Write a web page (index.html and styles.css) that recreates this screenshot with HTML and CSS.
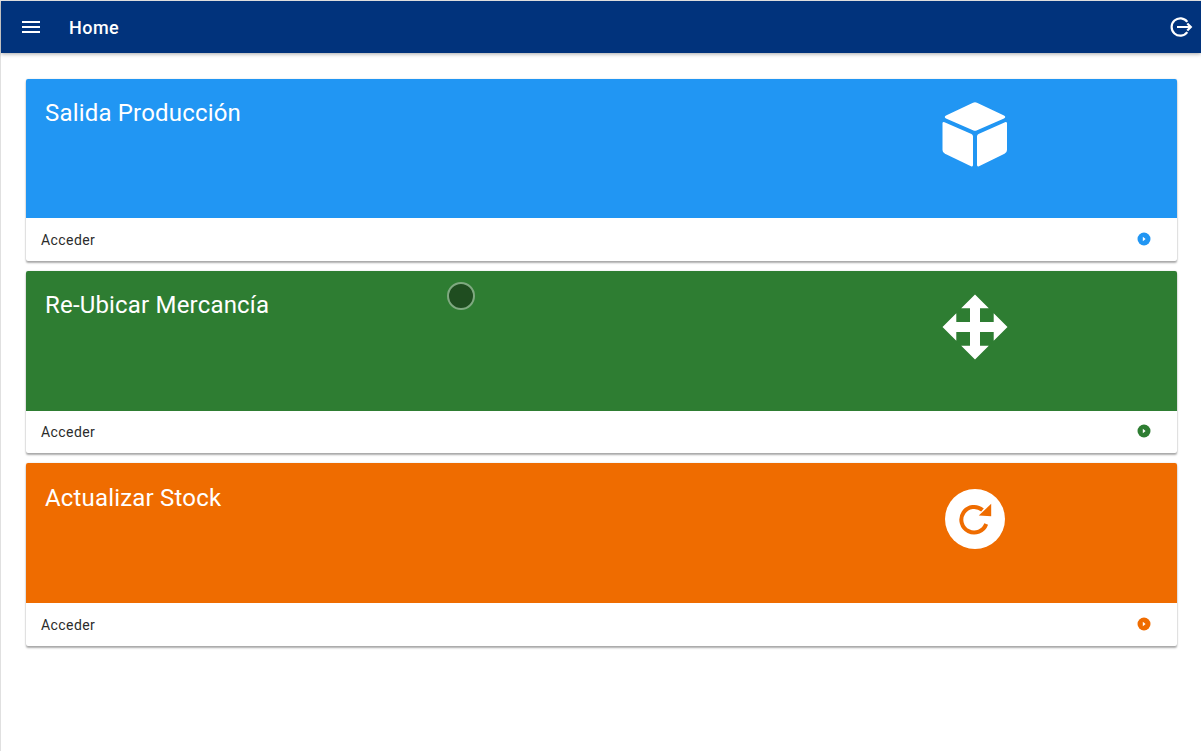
FILE: index.html
```html
<!DOCTYPE html>
<html lang="es">
<head>
<meta charset="utf-8">
<title>Home</title>
<link rel="stylesheet" href="styles.css">
</head>
<body>
<div class="app">
  <header class="toolbar">
    <svg class="menu-icon" viewBox="0 0 24 24"><path d="M3 18h18v-2H3v2zm0-5h18v-2H3v2zm0-7v2h18V6H3z"/></svg>
    <h1 class="title">Home</h1>
    <svg class="logout-icon" viewBox="0 0 24 24"><path class="ring" d="M18.300 6.800A8.700 8.700 0 1 0 18.300 17.200"/><path class="ring" d="M8 12H21.500M18.300 8.500L21.800 12L18.300 15.500"/></svg>
  </header>
  <main class="cards">
    <section class="card">
      <div class="card-head blue">
        <h2 class="card-title">Salida Producción</h2>
        <svg class="big-icon" viewBox="0 0 66 66"><path d="M33 1.200Q34 1.200 35 1.700L62 14.500Q64.500 16 62 17.500L34.500 29.500Q33 30 31.500 29.500L4 17.500Q1.500 16 4 14.500L31 1.700Q32 1.200 33 1.200Z"/><path d="M0.500 22.500Q0.500 20.500 2.500 21.200L29.500 33Q31 33.800 31 35.500V64Q31 66 29 65.200L3 52.800Q0.500 51.600 0.500 49Z"/><path d="M65 22.500Q65 20.500 63 21.200L36.500 33Q35 33.800 35 35.500V64Q35 66 37 65.200L62.500 52.800Q65 51.600 65 49Z"/></svg>
      </div>
      <div class="card-foot">
        <span class="access">Acceder</span>
        <svg class="go-icon text-blue" viewBox="0 0 14 14"><circle cx="7" cy="7" r="6.500"/><path class="go-arrow" d="M5.800 4.700L8.600 7l-2.800 2.300z"/></svg>
      </div>
    </section>
    <section class="card">
      <div class="card-head green">
        <h2 class="card-title">Re-Ubicar Mercancía</h2>
        <svg class="big-icon" viewBox="0 0 66 66"><path d="M33 0.500L46.800 14.300H38V28H51.700V19.200L65.500 33L51.700 46.800V38H38V51.700H46.800L33 65.500L19.200 51.700H28V38H14.300V46.800L0.500 33L14.300 19.200V28H28V14.300H19.200Z"/></svg>
      </div>
      <div class="card-foot">
        <span class="access">Acceder</span>
        <svg class="go-icon text-green" viewBox="0 0 14 14"><circle cx="7" cy="7" r="6.500"/><path class="go-arrow" d="M5.800 4.700L8.600 7l-2.800 2.300z"/></svg>
      </div>
    </section>
    <section class="card">
      <div class="card-head orange">
        <h2 class="card-title">Actualizar Stock</h2>
        <svg class="big-icon" viewBox="0 0 66 66"><circle cx="33" cy="33" r="30"/><path class="refresh-ring" d="M44.200 38A12.800 12.800 0 1 1 40.500 24"/><path class="refresh-head" d="M49.200 17.800V30.200L36.800 29.500Z"/></svg>
      </div>
      <div class="card-foot">
        <span class="access">Acceder</span>
        <svg class="go-icon text-orange" viewBox="0 0 14 14"><circle cx="7" cy="7" r="6.500"/><path class="go-arrow" d="M5.800 4.700L8.600 7l-2.800 2.300z"/></svg>
      </div>
    </section>
  </main>
  <div class="touch-dot"></div>
</div>
</body>
</html>
```
FILE: styles.css
```css
html, body {
  margin: 0;
  padding: 0;
  height: 100%;
  background: #fff;
  overflow: hidden;
}
.app {
  position: relative;
  box-sizing: border-box;
  height: 751px;
  border-left: 1px solid #e0e0e0;
  border-top: 1px solid #f1f1f1;
  font-family: Roboto, "Liberation Sans", sans-serif;
}
.toolbar {
  display: flex;
  align-items: center;
  height: 52px;
  background: #01337c;
  color: #fff;
  box-shadow: 0 1px 4px rgba(0, 0, 0, 0.35);
  padding: 0 8px 0 18px;
}
.menu-icon {
  width: 24px;
  height: 24px;
  fill: #fff;
}
.title {
  flex: 1;
  margin: 0 0 0 26px;
  font-size: 18px;
  font-weight: 500;
  letter-spacing: 0.45px;
}
.logout-icon {
  width: 24px;
  height: 24px;
}
.ring {
  fill: none;
  stroke: #fff;
  stroke-width: 2.2;
}
.cards {
  display: flex;
  flex-direction: column;
  gap: 9.95px;
  padding: 25.6px 24px 0 25px;
}
.card {
  height: 182.4px;
  display: flex;
  flex-direction: column;
  border-radius: 2px;
  overflow: hidden;
  background: #fff;
  box-shadow: 0 2px 2px rgba(0, 0, 0, 0.32), 0 0 2px rgba(0, 0, 0, 0.14);
}
.card-head {
  height: 139.7px;
  display: flex;
  justify-content: space-between;
  align-items: flex-start;
  padding: 0 169.5px 0 19px;
  color: #fff;
}
.blue { background: #2196f3; }
.green { background: #2e7d32; }
.orange { background: #ef6c00; }
.card-title {
  margin: 20.4px 0 0;
  font-size: 24px;
  line-height: 28px;
  font-weight: 400;
  letter-spacing: 0.18px;
}
.big-icon {
  width: 66px;
  height: 66px;
  margin-top: 22.7px;
  fill: #fff;
}
.card-foot {
  flex: 1;
  display: flex;
  align-items: center;
  justify-content: space-between;
  padding: 0 26px 0 15px;
}
.access {
  font-size: 14px;
  letter-spacing: 0.43px;
  color: #2b2b2b;
  margin-top: 0.8px;
}
.go-icon {
  width: 14px;
  height: 14px;
  margin-bottom: 1px;
}
.text-blue { fill: #2196f3; }
.text-green { fill: #2e7d32; }
.text-orange { fill: #ef6c00; }
.go-arrow { fill: #fff; }
.refresh-ring {
  fill: none;
  stroke: #ef6c00;
  stroke-width: 4;
}
.refresh-head {
  fill: #ef6c00;
}
.touch-dot {
  position: absolute;
  left: 446px;
  top: 281px;
  box-sizing: border-box;
  width: 28px;
  height: 28px;
  border-radius: 50%;
  background: #1f4d20;
  border: 2px solid #7fa980;
}
```
